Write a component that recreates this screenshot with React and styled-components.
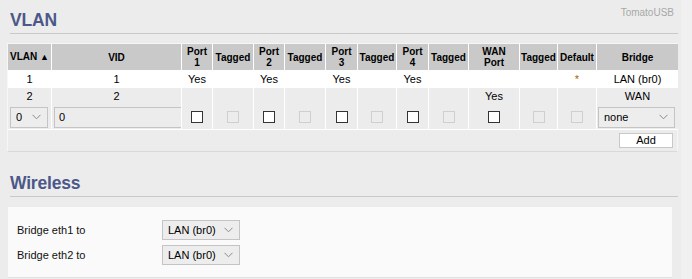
import React from "react";
import styled, { createGlobalStyle } from "styled-components";

const GlobalStyle = createGlobalStyle`
  html, body {
    margin: 0;
    padding: 0;
    background: #f0f0f0;
  }
  body {
    font-family: "Liberation Sans", Arial, sans-serif;
    font-size: 11px;
    color: #000;
  }
`;

const Page = styled.div`
  width: 681px;
  min-height: 279px;
  background: #ececec;
  overflow: hidden;
`;

const TitleBar = styled.div`
  display: flex;
  justify-content: space-between;
  align-items: flex-start;
  margin: ${(p) => p.$top}px 3px 0 10px;
  padding-bottom: 3px;
  border-bottom: 1px solid #c9c9c9;
`;

const Title = styled.h2`
  margin: 10px 0 0 0;
  font-size: 17.5px;
  line-height: 20px;
  font-weight: bold;
  letter-spacing: -0.2px;
  color: #4c5889;
`;

const Brand = styled.div`
  margin: 7px 4px 0 0;
  font-size: 10px;
  line-height: 12px;
  color: #a8a8a8;
`;

const GridBox = styled.div`
  margin: 9px 3px 0 7px;
  border: 1px solid #f6f6f6;
  border-bottom-color: #d9d9d9;
`;

const Grid = styled.table`
  width: 670px;
  table-layout: fixed;
  border-collapse: separate;
  border-spacing: 0;
  font-size: 11px;
`;

const HeadCell = styled.th`
  height: 26px;
  padding: 0 1px;
  background: #c9c9c9;
  border-left: 1px solid #fff;
  font-size: 10px;
  line-height: 11px;
  font-weight: bold;
  text-align: center;
  vertical-align: middle;
  &:first-child {
    border-left: none;
  }
`;

const Arrow = styled.span`
  font-size: 9px;
`;

const Row = styled.tr`
  td {
    height: ${(p) => p.$h}px;
    background: ${(p) => (p.$tone === "white" ? "#fff" : "#ececec")};
    border-bottom: ${(p) => (p.$last ? "1px solid #fff" : "none")};
  }
`;

const Cell = styled.td`
  padding: 0 2px;
  border-left: 1px solid #fff;
  text-align: center;
  vertical-align: middle;
  line-height: 13px;
  &:first-child {
    border-left: none;
  }
`;

const Star = styled.span`
  color: #a86400;
`;

const Check = styled.input`
  appearance: none;
  display: block;
  margin: 0 auto;
  width: 12px;
  height: 12px;
  border: 1px solid #333;
  background: #fff;
  &:disabled {
    border-color: #cfcfcf;
    background: #ececec;
  }
`;

const Dropdown = styled.div`
  display: flex;
  align-items: center;
  justify-content: space-between;
  box-sizing: border-box;
  width: ${(p) => p.$w}px;
  height: ${(p) => p.$h}px;
  padding: 0 6px 0 5px;
  border: 1px solid #c4c4c4;
  background: #ededed;
  font-size: 11px;
  color: #000;
  text-align: left;
`;

const TextField = styled.input`
  display: block;
  box-sizing: border-box;
  width: 128px;
  height: 21px;
  padding: 0 4px;
  border: 1px solid #c4c4c4;
  background: #ececec;
  font-family: "Liberation Sans", Arial, sans-serif;
  font-size: 11px;
  color: #000;
`;

const ActionRow = styled.div`
  display: flex;
  justify-content: flex-end;
  align-items: center;
  height: 21px;
  padding-right: 4px;
`;

const AddButton = styled.button`
  width: 54px;
  height: 15px;
  padding: 0;
  border: 1px solid #c8c8c8;
  background: #fff;
  font-family: "Liberation Sans", Arial, sans-serif;
  font-size: 11px;
  line-height: 13px;
  color: #000;
`;

const Panel = styled.div`
  width: 664px;
  margin: 10px 0 0 8px;
  padding: 10px 0 10px 9px;
  box-sizing: border-box;
  background: #fafafa;
  border-bottom: 1px solid #e2e2e2;
`;

const FieldRow = styled.div`
  display: flex;
  align-items: center;
  height: 25px;
`;

const FieldLabel = styled.div`
  width: 145px;
  font-size: 11px;
  color: #111;
`;

function Chevron() {
  return (
    <svg width="9" height="6" viewBox="0 0 9 6">
      <polyline points="0.5,0.8 4.5,4.8 8.5,0.8" fill="none" stroke="#8a8a8a" strokeWidth="1" />
    </svg>
  );
}

function Select({ value, w, h }) {
  return (
    <Dropdown $w={w} $h={h}>
      <span>{value}</span>
      <Chevron />
    </Dropdown>
  );
}

const columns = [
  { w: 43, label: <>VLAN <Arrow>▲</Arrow></> },
  { w: 130, label: "VID" },
  { w: 31, label: <>Port<br />1</> },
  { w: 41, label: "Tagged" },
  { w: 31, label: <>Port<br />2</> },
  { w: 41, label: "Tagged" },
  { w: 32, label: <>Port<br />3</> },
  { w: 39, label: "Tagged" },
  { w: 32, label: <>Port<br />4</> },
  { w: 40, label: "Tagged" },
  { w: 51, label: <>WAN<br />Port</> },
  { w: 38, label: "Tagged" },
  { w: 39, label: "Default" },
  { w: 82, label: "Bridge" },
];

const vlans = [
  { vlan: "1", vid: "1", ports: ["Yes", "", "Yes", "", "Yes", "", "Yes", "", "", ""], def: true, bridge: "LAN (br0)", tone: "white", h: 18 },
  { vlan: "2", vid: "2", ports: ["", "", "", "", "", "", "", "", "Yes", ""], def: false, bridge: "WAN", tone: "gray", h: 17 },
];

export default function App() {
  return (
    <Page>
      <GlobalStyle />
      <TitleBar $top={0}>
        <Title>VLAN</Title>
        <Brand>TomatoUSB</Brand>
      </TitleBar>
      <GridBox>
        <Grid>
          <colgroup>
            {columns.map((c, i) => (
              <col key={i} style={{ width: c.w }} />
            ))}
          </colgroup>
          <thead>
            <tr>
              {columns.map((c, i) => (
                <HeadCell key={i}>{c.label}</HeadCell>
              ))}
            </tr>
          </thead>
          <tbody>
            {vlans.map((v) => (
              <Row key={v.vlan} $tone={v.tone} $h={v.h}>
                <Cell>{v.vlan}</Cell>
                <Cell>{v.vid}</Cell>
                {v.ports.map((p, i) => (
                  <Cell key={i}>{p}</Cell>
                ))}
                <Cell>{v.def ? <Star>*</Star> : ""}</Cell>
                <Cell>{v.bridge}</Cell>
              </Row>
            ))}
            <Row $tone="gray" $h={24} $last>
              <Cell>
                <Select value="0" w={38} h={21} />
              </Cell>
              <Cell>
                <TextField defaultValue="0" />
              </Cell>
              {[false, true, false, true, false, true, false, true, false, true, true].map((dis, i) => (
                <Cell key={i}>
                  <Check type="checkbox" disabled={dis} />
                </Cell>
              ))}
              <Cell style={{ paddingLeft: 1 }}>
                <Select value="none" w={77} h={21} />
              </Cell>
            </Row>
          </tbody>
        </Grid>
        <ActionRow>
          <AddButton>Add</AddButton>
        </ActionRow>
      </GridBox>
      <TitleBar $top={11}>
        <Title>Wireless</Title>
      </TitleBar>
      <Panel>
        <FieldRow>
          <FieldLabel>Bridge eth1 to</FieldLabel>
          <Select value="LAN (br0)" w={78} h={20} />
        </FieldRow>
        <FieldRow>
          <FieldLabel>Bridge eth2 to</FieldLabel>
          <Select value="LAN (br0)" w={78} h={20} />
        </FieldRow>
      </Panel>
    </Page>
  );
}
